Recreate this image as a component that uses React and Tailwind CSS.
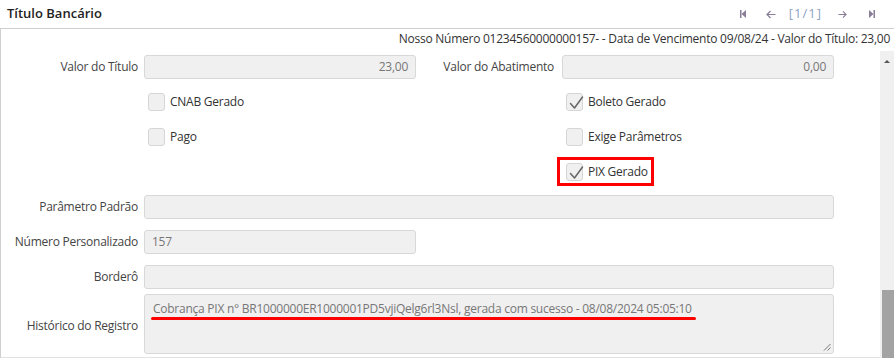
import React from 'react';

const Check = () => (
  <svg width="18" height="18" viewBox="0 0 18 18" className="absolute left-0 top-0">
    <path d="M3.5 9.5 L7.5 14 L15.5 3" fill="none" stroke="#666" strokeWidth="1.5" strokeLinecap="round" strokeLinejoin="round" />
  </svg>
);

const Checkbox = ({ label, checked }) => (
  <div className="flex items-center">
    <div className="relative w-[17px] h-[18px] bg-[#f0f0f0] border border-[#d6d6d6] rounded-[3px]">
      {checked && <Check />}
    </div>
    <span className="ml-[5px] text-[#333]">{label}</span>
  </div>
);

const Input = ({ value, className, right }) => (
  <div
    className={`h-[24px] bg-[#f0f0f0] border border-[#d8d8d8] rounded-[3px] flex items-center px-[7px] text-[#777] ${right ? 'justify-end' : ''} ${className}`}
  >
    {value}
  </div>
);

const Label = ({ children, className }) => (
  <div className={`text-right text-[#444] pr-[6px] ${className}`}>{children}</div>
);

const NavIcons = () => (
  <div className="flex items-center h-full pr-[19px]">
    <svg width="6" height="8" viewBox="0 0 6 8" className="mr-[20px]">
      <rect x="0" y="0" width="1.5" height="8" fill="#8a7d98" />
      <path d="M6 0 L1.5 4 L6 8 Z" fill="#8a7d98" />
    </svg>
    <svg width="10" height="9" viewBox="0 0 10 9" className="mr-[13px]">
      <path d="M9.5 4.5 H1 M4.5 1 L1 4.5 L4.5 8" fill="none" stroke="#8a7d98" strokeWidth="1.2" />
    </svg>
    <span className="text-[#8ca3c4] text-[13px] mr-[16px] tracking-[1px]">[1/1]</span>
    <svg width="9" height="9" viewBox="0 0 10 9" className="mr-[22px]">
      <path d="M0.5 4.5 H9 M5.5 1 L9 4.5 L5.5 8" fill="none" stroke="#8a7d98" strokeWidth="1.2" />
    </svg>
    <svg width="6" height="8" viewBox="0 0 6 8">
      <path d="M0 0 L4.5 4 L0 8 Z" fill="#8a7d98" />
      <rect x="4.5" y="0" width="1.5" height="8" fill="#8a7d98" />
    </svg>
  </div>
);

export default function App() {
  return (
    <div className="w-[894px] h-[358px] overflow-hidden bg-white font-['Open_Sans',sans-serif] text-[12px] tracking-[-0.25px]">
      <div className="h-[29px] flex items-center justify-between border-b border-[#cfcfcf] pl-[7px]">
        <span className="font-semibold text-[13px] text-[#222] tracking-normal">Título Bancário</span>
        <NavIcons />
      </div>

      <div className="border-l border-[#d0d0d0] h-[329px] flex flex-col">
        <div className="h-[20px] flex items-center justify-end pr-[4px] text-[#333]">
          Nosso Número 01234560000000157- - Data de Vencimento 09/08/24 - Valor do Título: 23,00
        </div>

        <div className="flex flex-1">
          <div className="w-[879px] border-b border-[#e2e2e2]">
            <div className="h-[35px] flex items-center">
              <Label className="w-[143px]">Valor do Título</Label>
              <Input value="23,00" right className="w-[272px]" />
              <Label className="w-[146px] pr-[8px]">Valor do Abatimento</Label>
              <Input value="0,00" right className="w-[272px]" />
            </div>

            <div className="h-[35px] flex items-center">
              <div className="w-[418px] pl-[147px]">
                <Checkbox label="CNAB Gerado" />
              </div>
              <div className="pl-[147px]">
                <Checkbox label="Boleto Gerado" checked />
              </div>
            </div>

            <div className="h-[35px] flex items-center">
              <div className="w-[418px] pl-[147px]">
                <Checkbox label="Pago" />
              </div>
              <div className="pl-[147px]">
                <Checkbox label="Exige Parâmetros" />
              </div>
            </div>

            <div className="h-[35px] flex items-center">
              <div className="w-[418px]" />
              <div className="pl-[138px]">
                <div className="h-[29px] w-[97px] border-[3px] border-[#f00] flex items-center pl-[6px]">
                  <Checkbox label="PIX Gerado" checked />
                </div>
              </div>
            </div>

            <div className="h-[35px] flex items-center">
              <Label className="w-[143px]">Parâmetro Padrão</Label>
              <Input value="" className="w-[690px]" />
            </div>

            <div className="h-[35px] flex items-center">
              <Label className="w-[143px]">Número Personalizado</Label>
              <Input value="157" className="w-[272px]" />
            </div>

            <div className="h-[35px] flex items-center">
              <Label className="w-[143px]">Borderô</Label>
              <Input value="" className="w-[690px]" />
            </div>

            <div className="flex items-start">
              <Label className="w-[143px] pt-[23px]">Histórico do Registro</Label>
              <div className="relative w-[690px] h-[60px] bg-[#f0f0f0] border border-[#d8d8d8] rounded-[3px] pl-[8px] pt-[5px] text-[#777]">
                <span className="relative inline-block">
                  Cobrança PIX n° BR1000000ER1000001PD5vjiQelg6rl3Nsl, gerada com sucesso - 08/08/2024 05:05:10
                  <span className="absolute left-[-2px] right-[-4px] top-[17px] h-[3px] bg-[#f00] rounded-full" />
                </span>
                <svg width="8" height="8" viewBox="0 0 8 8" className="absolute right-[2px] bottom-[2px]">
                  <path d="M7.5 1 L1 7.5 M7.5 4.5 L4.5 7.5" stroke="#777" strokeWidth="1" />
                </svg>
              </div>
            </div>
          </div>

          <div className="w-[14px] mt-[2px] bg-[#f0f0f0] flex flex-col justify-between">
            <svg width="14" height="14" viewBox="0 0 14 14" className="mt-[4px]">
              <path d="M4 8 L7 5 L10 8 Z" fill="#555" />
            </svg>
            <div className="ml-[2px] w-[12px] h-[68px] bg-[#a3a3a3]" />
          </div>
        </div>
      </div>
    </div>
  );
}
